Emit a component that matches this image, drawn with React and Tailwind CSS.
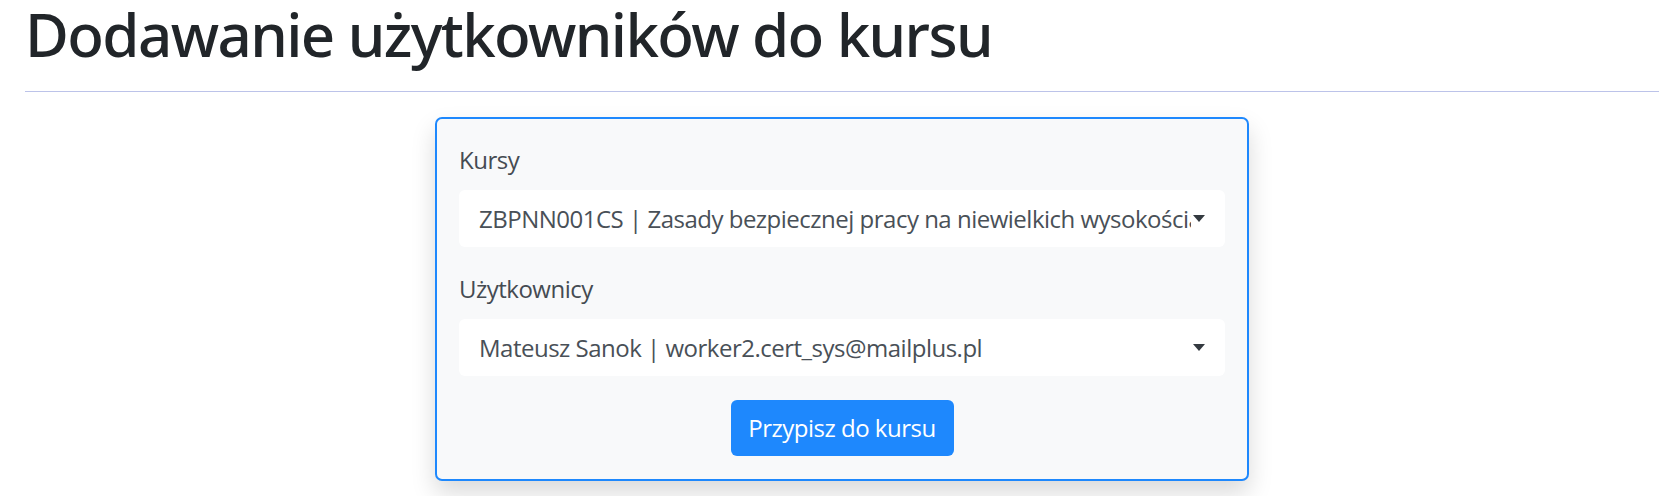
import React from 'react';

const courses = [
  'ZBPNN001CS | Zasady bezpiecznej pracy na niewielkich wysokościach',
];

const users = ['Mateusz Sanok | worker2.cert_sys@mailplus.pl'];

// mała strzałka selecta
function Caret() {
  return (
    <svg width="12" height="7" viewBox="0 0 12 7" className="shrink-0">
      <path d="M0 0h12L6 7z" fill="#343a40" />
    </svg>
  );
}

function SelectBox({ value }) {
  return (
    <div className="flex h-[57px] items-center gap-[2px] rounded-[6px] bg-white pl-[20px] pr-[20px]">
      <span className="min-w-0 flex-1 overflow-hidden whitespace-nowrap text-[24px] leading-[36px] tracking-[-0.5px] text-[#495057]">
        {value}
      </span>
      <Caret />
    </div>
  );
}

function Field({ label, value, last }) {
  return (
    <div className={last ? '' : 'mb-[24px]'}>
      <label className="mb-[12px] block text-[24px] leading-[36px] tracking-[-0.5px] text-[#454b52]">
        {label}
      </label>
      <SelectBox value={value} />
    </div>
  );
}

export default function App() {
  return (
    <div className="min-h-screen bg-white pl-[25px] pr-[12px] font-['Open_Sans','Noto_Sans',sans-serif]">
      <h1 className="font-['Noto_Sans','Open_Sans',sans-serif] text-[60px] font-medium leading-[68px] tracking-[-1.6px] text-[#212529]">
        Dodawanie użytkowników do kursu
      </h1>
      <hr className="mt-[23px] border-0 border-t border-[#bcc3e9]" />

      <div className="mt-[25px] flex justify-center">
        <form className="w-[814px] rounded-[7px] border-2 border-[#1e88fd] bg-[#f8f9fa] px-[22px] py-[23px] shadow-[0_12px_24px_rgba(0,0,0,0.15)]">
          <Field label="Kursy" value={courses[0]} />
          <Field label="Użytkownicy" value={users[0]} />
          <div className="mt-[24px] flex justify-center">
            <button
              type="button"
              className="flex h-[56px] w-[223px] items-center justify-center rounded-[6px] bg-[#1e88fd] text-[24px] tracking-[-0.5px] text-white"
            >
              Przypisz do kursu
            </button>
          </div>
        </form>
      </div>
    </div>
  );
}
